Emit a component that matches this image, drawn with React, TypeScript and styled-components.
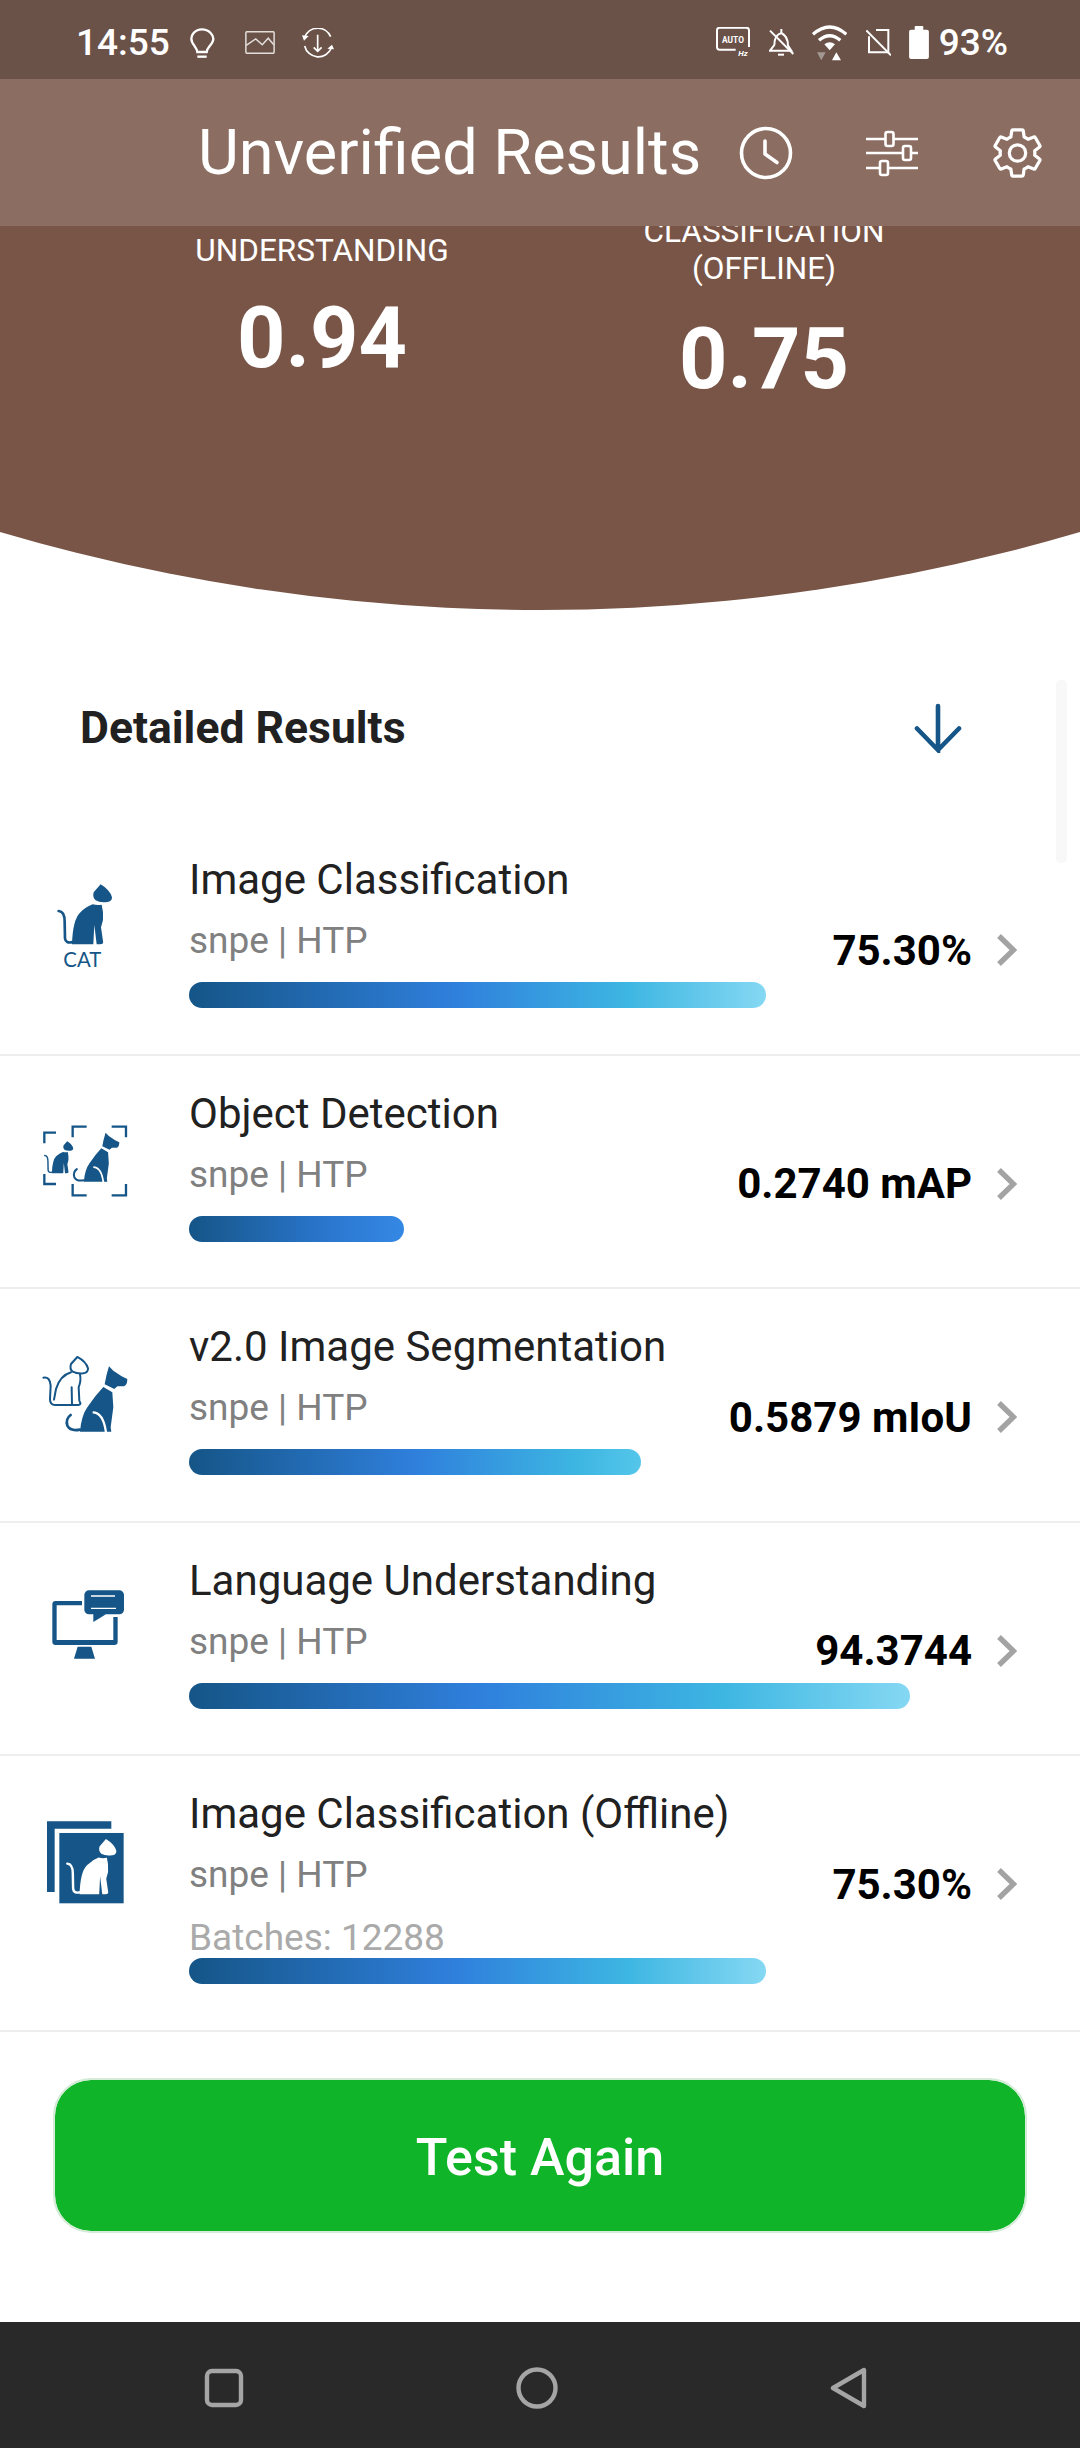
import React from 'react';
import styled, { createGlobalStyle } from 'styled-components';

const BLUE = '#155587';

const GlobalStyle = createGlobalStyle`
  html, body {
    margin: 0;
    padding: 0;
    background: #ffffff;
  }
  body {
    font-family: Roboto, "Noto Sans", sans-serif;
  }
`;

const catHead = 'M302 133 L281 157 Q277 172 287 181 Q300 189 322 186 Q336 185 336 172 Q330 150 302 133Z';
const catBody = 'M278 193 Q292 197 305 194 Q311 215 309 240 L303 262 L309 303 Q312 313 300 313 L290 313 L283 255 L280 313 L216 313 Q218 240 240 218 Q258 200 278 193Z';
const catTail = 'M176 213 Q194 214 194 245 L195 295 Q197 312 218 306';

const Cat = ({ color }: { color: string }) => (
    <g>
        <path d={catHead} fill={color} />
        <path d={catBody} fill={color} />
        <path d={catTail} fill="none" stroke={color} strokeWidth="8" strokeLinecap="round" />
    </g>
);

const Dog = () => (
    <g>
        <path d="M327 262 L340 275 L365 292 L382 300 Q382 318 372 322 L352 322 L343 330 L314 316 Q318 290 327 262Z" fill={BLUE} />
        <path d="M310 324 L337 340 L340 385 L332 445 L334 458 L240 458 Q244 410 262 385 Q285 350 310 324Z" fill={BLUE} />
        <path d="M278 400 Q310 400 318 460" fill="none" stroke="#fff" strokeWidth="7" />
        <path d="M212 408 Q196 420 202 440 Q212 458 240 452" fill="none" stroke={BLUE} strokeWidth="8" strokeLinecap="round" />
    </g>
);

const CatIcon = () => (
    <svg width="120" height="120" viewBox="0 0 120 120">
        <g transform="translate(-25,-27) scale(0.3333)">
            <Cat color={BLUE} />
            <text x="247" y="381" textAnchor="middle" fontFamily="Lato, Roboto, sans-serif" fontSize="61" fill={BLUE}>CAT</text>
        </g>
    </svg>
);

const DetectIcon = () => (
    <svg width="120" height="120" viewBox="0 0 120 120">
        <g transform="translate(-5,-1) scale(0.3333)">
            <g fill="none" stroke={BLUE} strokeWidth="7">
                <path d="M108 98 H73 V130" />
                <path d="M73 222 V252 H108" />
                <path d="M200 80 H158 V112" />
                <path d="M275 80 H318 V112" />
                <path d="M158 252 V286 H200" />
                <path d="M318 252 V286 H275" />
            </g>
            <g transform="translate(-20,52.5) scale(0.535)"><Cat color={BLUE} /></g>
            <g transform="translate(11.5,-98.5) scale(0.75)"><Dog /></g>
        </g>
    </svg>
);

const SegmentIcon = () => (
    <svg width="120" height="120" viewBox="0 0 120 120">
        <g transform="translate(-25,-55) scale(0.3333)">
            <g fill="none" stroke={BLUE} strokeWidth="6" strokeLinecap="round" strokeLinejoin="round">
                <path d="M232 234 L213 255 Q208 270 218 278 Q232 285 250 283 Q265 280 264 268 Q258 248 232 234Z" />
                <path d="M213 280 Q180 290 168 330 L162 362" />
                <path d="M240 286 Q244 305 236 325 L238 365 Q246 378 234 378 L165 378 Q150 378 150 360 L152 320 Q150 292 130 296" />
                <path d="M215 325 L216 376" />
            </g>
            <Dog />
        </g>
    </svg>
);

const LanguageIcon = () => (
    <svg width="120" height="120" viewBox="0 0 120 120">
        <g transform="translate(-25,-8) scale(0.3333)">
            <path d="M167 123 H246 V136 H170 V240 H340 V171 H353 V245 Q353 255 343 255 H167 Q157 255 157 245 V133 Q157 123 167 123Z" fill={BLUE} />
            <path d="M233 260 H274 L285 296 H222Z" fill={BLUE} />
            <rect x="253" y="91" width="119" height="72" rx="14" fill={BLUE} />
            <path d="M280 160 L280 186 L318 163Z" fill={BLUE} />
            <path d="M273 108 H345 M273 145 H348" stroke="#fff" strokeWidth="4" />
        </g>
    </svg>
);

const OfflineIcon = () => (
    <svg width="120" height="120" viewBox="0 0 120 120">
        <g transform="translate(-25,-241) scale(0.3333)">
            <path d="M141 784 H334 V806 H164 V996 H141Z" fill={BLUE} />
            <rect x="178" y="819" width="193" height="211" fill={BLUE} />
            <g transform="translate(40,715) scale(0.92)"><Cat color="#fff" /></g>
        </g>
    </svg>
);

const BulbIcon = () => (
    <svg width="28" height="30" viewBox="392 40 84 90" fill="none" stroke="#fff" strokeWidth="7">
        <path d="M428 44 C405 44 396 62 396 72 C396 88 412 96 414 112 H442 C444 96 462 88 462 72 C462 62 450 44 428 44Z" />
        <path d="M414 126 H442" />
    </svg>
);

const GalleryIcon = () => (
    <svg width="30" height="23" viewBox="558 48 90 70" fill="none" stroke="#e4dedb" strokeWidth="4.5">
        <rect x="560" y="50" width="86" height="66" rx="4" />
        <path d="M561 92 L590 72 L610 90 L628 70 L645 90" />
    </svg>
);

const SyncIcon = () => (
    <svg width="32" height="30" viewBox="730 38 96 90" fill="none" stroke="#fff" strokeWidth="5">
        <path d="M738 66 A42 42 0 0 1 816 64" />
        <path d="M818 98 A42 42 0 0 1 738 92" />
        <path d="M777 58 V108 M765 96 L777 108 L789 96" />
        <path d="M730 60 L750 62 L736 76Z M826 102 L806 100 L820 88Z" fill="#fff" stroke="none" />
    </svg>
);

const AutoHzIcon = () => (
    <svg width="34" height="31" viewBox="49 30 102 93" fill="none">
        <path d="M108 98 H60 Q52 98 52 90 V40 Q52 32 60 32 H140 Q148 32 148 40 V90" stroke="#fff" strokeWidth="6" />
        <text x="100" y="77" textAnchor="middle" fontFamily="Roboto, sans-serif" fontWeight="700" fontSize="25" fill="#fff">AUTO</text>
        <text x="130" y="116" textAnchor="middle" fontFamily="Roboto, sans-serif" fontWeight="700" fontStyle="italic" fontSize="24" fill="#fff">Hz</text>
    </svg>
);

const BellOffIcon = () => (
    <svg width="25" height="27" viewBox="205 30 75 81" fill="none" stroke="#fff" strokeWidth="6">
        <path d="M242 30 V42 C228 46 221 58 221 78 L208 95 H272 L262 80 C262 64 258 50 242 42" />
        <path d="M208 35 L278 105" />
        <path d="M232 107 H250" />
    </svg>
);

const WifiIcon = () => (
    <svg width="35" height="36" viewBox="335 18 105 108" fill="none">
        <path d="M338 46 Q388 2 438 46" stroke="#fff" strokeWidth="10" />
        <path d="M356 64 Q388 36 420 64" stroke="#fff" strokeWidth="10" />
        <path d="M372 76 Q388 64 404 76 L388 94Z" fill="#fff" />
        <path d="M350 100 H376 L363 124Z" fill="#a39894" />
        <path d="M395 124 H422 L408 100Z" fill="#fff" />
    </svg>
);

const SimOffIcon = () => (
    <svg width="25" height="27" viewBox="495 28 75 81" fill="none" stroke="#fff" strokeWidth="6">
        <path d="M525 31 H562 V98 H504 V50" />
        <path d="M496 32 L570 107" />
    </svg>
);

const BatteryIcon = () => (
    <svg width="20" height="33" viewBox="628 15 60 100" fill="#fff">
        <rect x="628" y="26" width="60" height="89" rx="6" />
        <rect x="645" y="15" width="26" height="14" rx="2" />
    </svg>
);

const ClockIcon = () => (
    <svg width="54" height="54" viewBox="0 0 54 54" fill="none" stroke="#fff" strokeWidth="3.6" strokeLinecap="round" strokeLinejoin="round">
        <circle cx="27" cy="27" r="24.5" />
        <path d="M26 15 V28 L38 36.5" />
    </svg>
);

const SlidersIcon = () => (
    <svg width="54" height="50" viewBox="0 0 54 50" fill="none" stroke="#fff" strokeWidth="2.6">
        <path d="M1 11 H21 M29 11 H53 M1 25 H38 M46 25 H53 M1 40 H15 M23 40 H53" />
        <rect x="20.5" y="4" width="8" height="14" rx="2" />
        <rect x="38" y="18" width="8" height="14" rx="2" />
        <rect x="15" y="33" width="8" height="14" rx="2" />
    </svg>
);

const GearIcon = () => (
    <svg width="53" height="58" viewBox="1 0 22 24" fill="none" stroke="#fff" strokeWidth="1.35" strokeLinejoin="round">
        <path d="M19.14 12.94c.04-.3.06-.61.06-.94 0-.32-.02-.64-.07-.94l2.03-1.58c.18-.14.23-.41.12-.61l-1.92-3.32c-.12-.22-.37-.29-.59-.22l-2.39.96c-.5-.38-1.03-.7-1.62-.94l-.36-2.54c-.04-.24-.24-.41-.48-.41h-3.84c-.24 0-.43.17-.47.41l-.36 2.54c-.59.24-1.13.57-1.62.94l-2.39-.96c-.22-.08-.47 0-.59.22L2.74 8.87c-.12.21-.08.47.12.61l2.03 1.58c-.05.3-.09.63-.09.94s.02.64.07.94l-2.03 1.58c-.18.14-.23.41-.12.61l1.92 3.32c.12.22.37.29.59.22l2.39-.96c.5.38 1.03.7 1.62.94l.36 2.54c.05.24.24.41.48.41h3.84c.24 0 .44-.17.47-.41l.36-2.54c.59-.24 1.13-.56 1.62-.94l2.39.96c.22.08.47 0 .59-.22l1.92-3.32c.12-.22.07-.47-.12-.61l-2.01-1.58z" />
        <circle cx="12" cy="12" r="3.4" />
    </svg>
);

const ArrowDownIcon = () => (
    <svg width="50" height="50" viewBox="0 0 50 50" fill="none" stroke={BLUE} strokeWidth="4.6" strokeLinecap="round">
        <path d="M25 3 V47 L4 25.5 M25 47 L46 25.5" />
    </svg>
);

const ChevronIcon = () => (
    <svg width="20" height="32" viewBox="0 0 20 32" fill="none" stroke="#a3a3a3" strokeWidth="5.4">
        <path d="M2 2 L16.5 16 L2 30" />
    </svg>
);

const SquareNavIcon = () => (
    <svg width="40" height="40" viewBox="0 0 40 40" fill="none" stroke="#a5a5a5" strokeWidth="4.4">
        <rect x="3" y="3" width="34" height="34" rx="5" />
    </svg>
);

const CircleNavIcon = () => (
    <svg width="44" height="44" viewBox="0 0 44 44" fill="none" stroke="#a5a5a5" strokeWidth="4.4">
        <circle cx="22" cy="22" r="18.5" />
    </svg>
);

const BackNavIcon = () => (
    <svg width="40" height="44" viewBox="0 0 40 44" fill="none" stroke="#a5a5a5" strokeWidth="4.4" strokeLinejoin="round">
        <path d="M34 4 V40 L3 22Z" />
    </svg>
);

const rows = [
    {
        id: 'ic',
        icon: <CatIcon />,
        title: 'Image Classification',
        value: '75.30%',
        width: 577,
        stops: '#155587 0%, #2f7fdc 46%, #3db6e2 76%, #85d8f3 100%',
    },
    {
        id: 'od',
        icon: <DetectIcon />,
        title: 'Object Detection',
        value: '0.2740 mAP',
        width: 215,
        stops: '#155587 0%, #2b77cf 65%, #3488e4 100%',
    },
    {
        id: 'seg',
        icon: <SegmentIcon />,
        title: 'v2.0 Image Segmentation',
        value: '0.5879 mIoU',
        width: 452,
        stops: '#155587 0%, #2f7fdc 50%, #3db6e2 86%, #55c6ea 100%',
    },
    {
        id: 'lang',
        icon: <LanguageIcon />,
        title: 'Language Understanding',
        value: '94.3744',
        width: 721,
        stops: '#155587 0%, #2f7fdc 40%, #3db6e2 74%, #85d8f3 100%',
    },
    {
        id: 'off',
        icon: <OfflineIcon />,
        title: 'Image Classification (Offline)',
        value: '75.30%',
        width: 577,
        stops: '#155587 0%, #2f7fdc 46%, #3db6e2 76%, #85d8f3 100%',
        batches: 'Batches: 12288',
    },
];

const App: React.FC = () => {
    return (
        <Page>
            <GlobalStyle />
            <StatusBar>
                <StatusGroup>
                    <Time>14:55</Time>
                    <BulbIcon />
                    <GalleryIcon />
                    <SyncIcon />
                </StatusGroup>
                <StatusGroup $gap={18.5}>
                    <AutoHzIcon />
                    <BellOffIcon />
                    <WifiIcon />
                    <SimOffIcon />
                    <BatteryIcon />
                    <Battery>93%</Battery>
                </StatusGroup>
            </StatusBar>

            <Toolbar>
                <Title>Unverified Results</Title>
                <ToolbarIcons>
                    <ClockIcon />
                    <SlidersIcon />
                    <GearIcon />
                </ToolbarIcons>
            </Toolbar>

            <Hero>
                <Score $offset={6}>
                    <ScoreLabel>UNDERSTANDING</ScoreLabel>
                    <ScoreValue $gap={20}>0.94</ScoreValue>
                </Score>
                <Score $offset={-13}>
                    <ScoreLabel>CLASSIFICATION<br />(OFFLINE)</ScoreLabel>
                    <ScoreValue $gap={23}>0.75</ScoreValue>
                </Score>
            </Hero>

            <DetailHeader>
                <DetailTitle>Detailed Results</DetailTitle>
                <ArrowDownIcon />
            </DetailHeader>
            <ScrollThumb />

            <List>
                {rows.map((r) => (
                    <Row key={r.id} $tall={!!r.batches}>
                        <IconCell>{r.icon}</IconCell>
                        <Body>
                            <RowTitle>{r.title}</RowTitle>
                            <RowSub>snpe | HTP</RowSub>
                            {r.batches && <Batches>{r.batches}</Batches>}
                            <Bar $width={r.width} $stops={r.stops} $tight={!!r.batches} />
                        </Body>
                        <Trail>
                            <Value>{r.value}</Value>
                            <ChevronIcon />
                        </Trail>
                    </Row>
                ))}
            </List>

            <Footer>
                <TestButton>Test Again</TestButton>
            </Footer>

            <NavBar>
                <SquareNavIcon />
                <CircleNavIcon />
                <BackNavIcon />
            </NavBar>
        </Page>
    );
};
export default App;

const Page = styled.div`
  position: relative;
  width: 1080px;
  height: 2448px;
  overflow: hidden;
  display: flex;
  flex-direction: column;
  background: #fff;
`;

const StatusBar = styled.div`
  height: 79px;
  flex: none;
  background: #6b5249;
  display: flex;
  align-items: center;
  justify-content: space-between;
  padding: 6px 72px 0 76px;
  box-sizing: border-box;
  color: #fff;
`;

const StatusGroup = styled.div<{ $gap?: number }>`
  display: flex;
  align-items: center;
  gap: ${(p) => p.$gap ?? 27}px;
`;

const Time = styled.span`
  font-size: 37px;
  font-weight: 500;
  margin-right: -7px;
`;

const Battery = styled.span`
  font-size: 37px;
  font-weight: 500;
  margin-left: -9px;
`;

const Toolbar = styled.div`
  height: 147px;
  flex: none;
  background: #8b6d61;
  display: flex;
  align-items: center;
  justify-content: space-between;
  padding: 0 36px 0 198px;
  box-sizing: border-box;
`;

const Title = styled.h1`
  margin: 0;
  font-size: 63px;
  font-weight: 400;
  color: #fff;
  white-space: nowrap;
`;

const ToolbarIcons = styled.div`
  display: flex;
  align-items: center;
  gap: 72px;
`;

const Hero = styled.section`
  height: 384px;
  flex: none;
  background: #795547;
  clip-path: circle(1908px at 50% -1524px);
  overflow: hidden;
  display: grid;
  grid-template-columns: 442px 442px;
  padding-left: 101px;
  align-items: start;
`;

const Score = styled.div<{ $offset: number }>`
  margin-top: ${(p) => p.$offset}px;
  display: flex;
  flex-direction: column;
  align-items: center;
  color: #fff;
`;

const ScoreLabel = styled.div`
  font-size: 31.5px;
  line-height: 37px;
  text-align: center;
`;

const ScoreValue = styled.div<{ $gap: number }>`
  font-size: 84.5px;
  line-height: 100px;
  font-weight: 700;
  margin-top: ${(p) => p.$gap}px;
`;

const DetailHeader = styled.div`
  height: 212px;
  flex: none;
  display: flex;
  align-items: center;
  justify-content: space-between;
  padding: 24px 117px 0 80px;
  box-sizing: border-box;
`;

const DetailTitle = styled.h2`
  margin: 0;
  font-size: 44.5px;
  font-weight: 700;
  color: #212121;
`;

const ScrollThumb = styled.div`
  position: absolute;
  left: 1056px;
  top: 680px;
  width: 11px;
  height: 183px;
  border-radius: 5px;
  background: #f8f8f8;
`;

const List = styled.div`
  flex: none;
  display: flex;
  flex-direction: column;
`;

const Row = styled.div<{ $tall: boolean }>`
  height: ${(p) => (p.$tall ? 276 : 233.5)}px;
  box-sizing: border-box;
  border-bottom: 2px solid #eeeeee;
  display: grid;
  grid-template-columns: 189px 1fr;
  grid-template-rows: 1fr;
  padding-right: 63px;
`;

const IconCell = styled.div`
  grid-column: 1;
  grid-row: 1;
  width: 170px;
  height: 210px;
  display: flex;
  align-items: center;
  justify-content: center;
`;

const Body = styled.div`
  grid-column: 2;
  grid-row: 1;
  padding-top: 35px;
  display: flex;
  flex-direction: column;
  align-items: flex-start;
`;

const RowTitle = styled.div`
  font-size: 42px;
  line-height: 46px;
  color: #212121;
`;

const RowSub = styled.div`
  font-size: 37px;
  line-height: 42px;
  margin-top: 17px;
  color: #808080;
`;

const Batches = styled.div`
  font-size: 37px;
  line-height: 40px;
  margin-top: 22px;
  color: #aaaaaa;
`;

const Bar = styled.div<{ $width: number; $stops: string; $tight: boolean }>`
  width: ${(p) => p.$width}px;
  height: 26px;
  margin-top: ${(p) => (p.$tight ? 0 : 20)}px;
  border-radius: 13px;
  background: linear-gradient(90deg, ${(p) => p.$stops});
`;

const Trail = styled.div`
  grid-column: 2;
  grid-row: 1;
  justify-self: end;
  align-self: start;
  margin-top: 105px;
  height: 46px;
  display: flex;
  align-items: center;
  gap: 25px;
`;

const Value = styled.div`
  font-size: 42px;
  font-weight: 700;
  color: #000;
  white-space: nowrap;
`;

const Footer = styled.div`
  flex: 1;
  padding: 46px 53px 0;
  box-sizing: border-box;
`;

const TestButton = styled.button`
  width: 100%;
  height: 155px;
  box-sizing: border-box;
  padding-top: 5px;
  border: 2px solid #d3ebd7;
  border-radius: 38px;
  background: #10b428;
  background-clip: padding-box;
  color: #fff;
  font-family: Roboto, sans-serif;
  font-size: 52px;
  font-weight: 500;
`;

const NavBar = styled.div`
  height: 126px;
  flex: none;
  background: #292929;
  display: flex;
  align-items: center;
  padding: 5px 0 0 204px;
  box-sizing: border-box;
  gap: 271px;
`;
